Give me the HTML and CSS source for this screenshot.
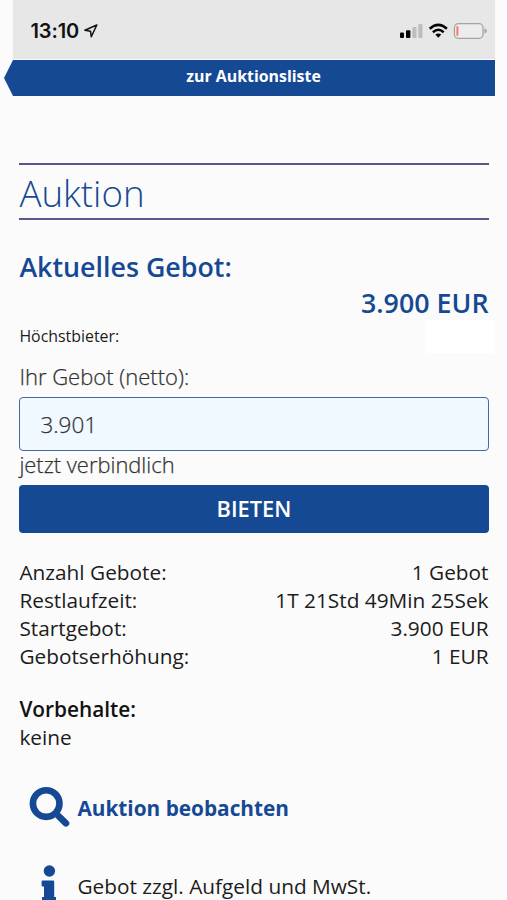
FILE: index.html
```html
<!DOCTYPE html>
<html lang="de">
<head>
<meta charset="utf-8">
<meta name="viewport" content="width=device-width, initial-scale=1">
<title>Auktion</title>
<link rel="stylesheet" href="styles.css">
</head>
<body>
<div class="screen">
  <header class="status">
    <span class="time">13:10</span>
    <svg class="loc" width="14" height="14" viewBox="0 0 14 14"><path d="M12.8 1 .9 6.3 6.5 7.2 7.3 12.8Z" fill="none" stroke="#111" stroke-width="1.5" stroke-linejoin="round"/></svg>
    <svg class="signals" width="88" height="18" viewBox="0 0 88 18">
      <g fill="#050505"><rect x="1" y="10.5" width="4" height="5.5" rx="1"/><rect x="7" y="8.3" width="4.4" height="7.7" rx="1"/></g>
      <g fill="#bebebe"><rect x="13.3" y="5" width="4.2" height="11" rx="1"/><rect x="19.3" y="2" width="4.2" height="14" rx="1"/></g>
      <g fill="none" stroke="#050505" stroke-width="2.5"><path d="M30.7 6.7Q39.3-1 47.9 6.7"/><path d="M33.9 10.2Q39.3 5.4 44.7 10.2"/></g>
      <path d="M36.3 12.6Q39.3 10.2 42.3 12.6L39.3 15.7Z" fill="#050505"/>
      <rect x="55.4" y="1.7" width="28.6" height="14.6" rx="4" fill="#ececec" stroke="#a4a4a4" stroke-width="1.3"/>
      <rect x="57.4" y="4" width="2" height="10" rx="1" fill="#ff7b6f"/>
      <path d="M85.5 6.3Q87.8 7.2 87.8 9T85.5 11.7Z" fill="#a0a0a0"/>
    </svg>
  </header>
  <a class="back"><span>zur Auktionsliste</span></a>
  <main class="content">
    <h1 class="title"><span>Auktion</span></h1>
    <h2 class="current"><span>Aktuelles Gebot:</span></h2>
    <div class="amount"><span>3.900 EUR</span></div>
    <div class="bidder"><span>Höchstbieter:</span><i class="mask"></i></div>
    <div class="label"><span>Ihr Gebot (netto):</span></div>
    <div class="field"><span>3.901</span></div>
    <div class="binding"><span>jetzt verbindlich</span></div>
    <div class="bid"><span>BIETEN</span></div>
    <div class="facts">
      <div class="row"><span>Anzahl Gebote:</span><span>1 Gebot</span></div>
      <div class="row"><span>Restlaufzeit:</span><span>1T 21Std 49Min 25Sek</span></div>
      <div class="row"><span>Startgebot:</span><span>3.900 EUR</span></div>
      <div class="row"><span>Gebotserhöhung:</span><span>1 EUR</span></div>
    </div>
    <div class="reserve"><b>Vorbehalte:</b><span>keine</span></div>
    <div class="watch">
      <svg width="42" height="42" viewBox="0 0 42 42"><circle cx="17.2" cy="17.6" r="13.3" fill="none" stroke="#164994" stroke-width="6.6"/><path d="M27 27.5 37 37.3" stroke="#164994" stroke-width="6"/><path d="M30.5 31 37 37.3" stroke="#164994" stroke-width="6.6" stroke-linecap="round"/></svg>
      <strong>Auktion beobachten</strong>
    </div>
    <div class="info">
      <svg width="18" height="42" viewBox="0 0 18 42"><circle cx="9.4" cy="6" r="5.7" fill="#164994"/><path d="M3 15.5H13a1.2 1.2 0 0 1 1.2 1.2V32H16v6H2v-6H4V21.5H2.5A1 1 0 0 1 1.6 20.5V16.7A1.2 1.2 0 0 1 3 15.5Z" fill="#164994"/></svg>
      <span>Gebot zzgl. Aufgeld und MwSt.</span>
    </div>
  </main>
</div>
</body>
</html>
```
FILE: styles.css
```css
* { box-sizing: border-box; }
html, body { margin: 0; height: 900px; overflow: hidden; }
body { background: #fbfbfb; color: #1c1c1c; font-family: "Open Sans", sans-serif; }
.screen { height: 900px; overflow: hidden; }
span, strong, b { white-space: nowrap; }
.status { display: flex; margin-left: 13px; width: 482px; height: 59px; padding: 21px 8.5px 0 17.5px; background: #e7e7e7; }
.time { font: 600 20px/21px Inter, sans-serif; color: #111; letter-spacing: -0.1px; }
.loc { margin: 3px 0 0 4.5px; }
.signals { margin: 1px 0 0 auto; }
.back { display: flex; align-items: center; justify-content: center; margin: 1px 0 0 4px; width: 491px; height: 36px; padding: 0 0 5px 8px; background: #164994; clip-path: polygon(9px 0, 100% 0, 100% 100%, 9px 100%, 0 50%); color: #fff; font-size: 15.9px; font-weight: 700; }
.content { display: flex; flex-direction: column; margin: 67px 18.5px 0 19.4px; }
.title { margin: 0; height: 57px; border: solid #5b548f; border-width: 2px 0; color: #164994; font-size: 36.7px; font-weight: 300; line-height: 56px; }
.current { margin: 28px 0 0; height: 38px; color: #164994; font-size: 26.8px; font-weight: 600; line-height: 38px; }
.amount { height: 34px; color: #164994; font-size: 26.8px; font-weight: 600; line-height: 33px; text-align: right; }
.bidder { display: flex; justify-content: space-between; height: 33px; margin-right: -6px; font-size: 15.9px; line-height: 32px; }
.mask { width: 69px; height: 33px; background: #fff; }
.label { margin-top: 8px; height: 36px; color: #333; font-size: 22px; font-weight: 300; line-height: 30px; }
.field { height: 54px; padding-left: 20px; border: 1.5px solid #4866a7; border-radius: 4px; background: #f0f9ff; color: #333; font-size: 22.5px; font-weight: 300; line-height: 54px; }
.binding { height: 34px; color: #333; font-size: 21.9px; font-weight: 300; line-height: 27px; }
.label, .field, .binding { -webkit-text-stroke: 0.25px #333; }
.bid { height: 48px; border-radius: 4px; background: #164994; color: #fff; font-size: 21.8px; font-weight: 600; line-height: 48px; text-align: center; }
.facts { margin-top: 25px; font-size: 20.8px; line-height: 28px; }
.row { display: flex; justify-content: space-between; height: 28px; }
.reserve { display: flex; flex-direction: column; margin-top: 25px; font-size: 20.8px; line-height: 28px; }
.reserve b { font-weight: 600; color: #111; }
.watch { display: flex; margin: 35px 0 0 10px; height: 42px; color: #164994; font-size: 20.8px; line-height: 44px; }
.watch strong { margin-left: 6px; font-weight: 700; }
.info { display: flex; margin: 37px 0 0 21px; height: 42px; font-size: 20.8px; line-height: 42px; }
.info span { margin-left: 19px; }
```
